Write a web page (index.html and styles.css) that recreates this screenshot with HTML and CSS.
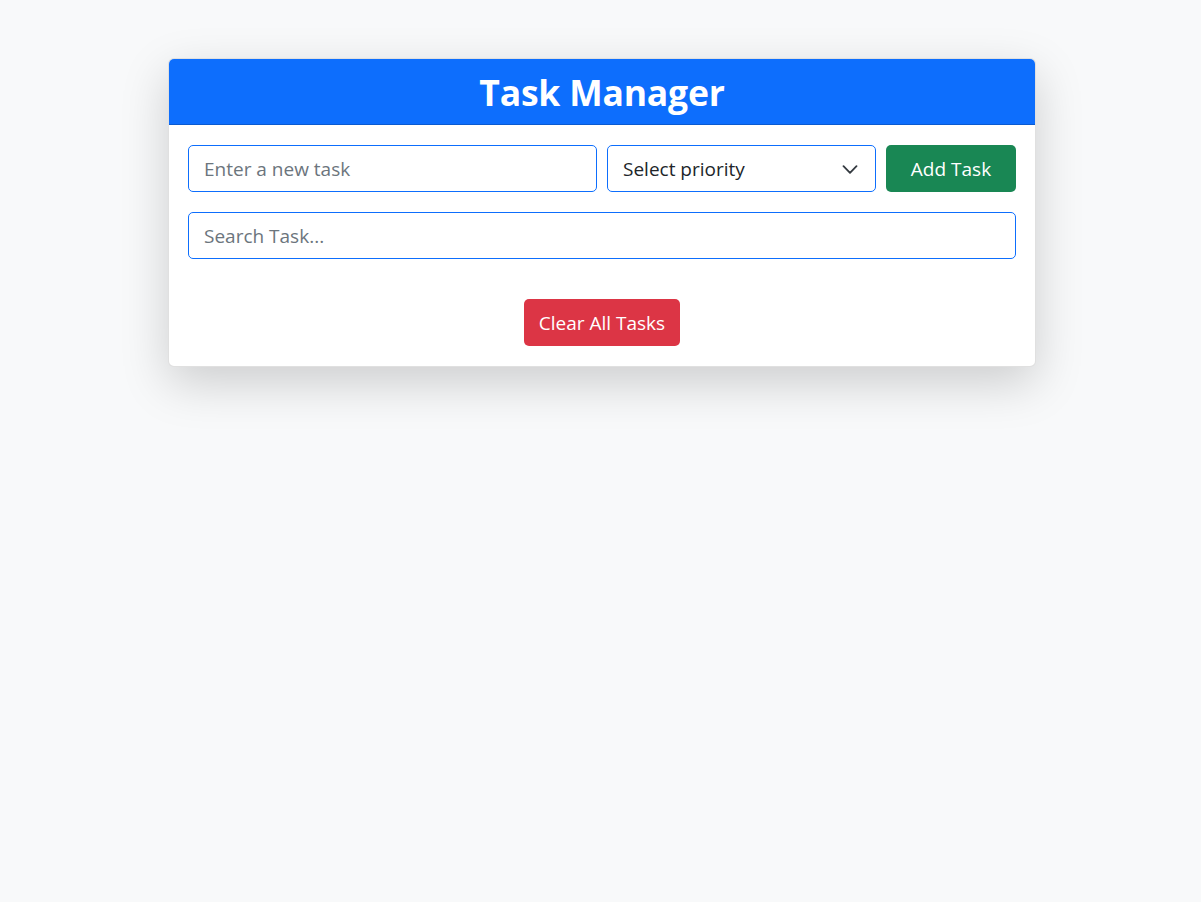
FILE: index.html
```html
<!DOCTYPE html>
<html lang="en">
<head>
<meta charset="utf-8">
<title>Task Manager</title>
<link rel="stylesheet" href="styles.css">
</head>
<body>
<main class="page">
  <section class="card">
    <header class="card-header">
      <h1 class="title">Task Manager</h1>
    </header>
    <div class="card-body">
      <div class="add-row">
        <input class="field field-task" type="text" placeholder="Enter a new task">
        <div class="select-wrap">
          <select class="field field-select">
            <option>Select priority</option>
            <option>High</option>
            <option>Medium</option>
            <option>Low</option>
          </select>
          <svg class="chevron" viewBox="0 0 16 9" width="16" height="9" aria-hidden="true"><path fill="none" stroke="#343a40" stroke-linecap="round" stroke-linejoin="round" stroke-width="1.8" d="M1.5 1.2 8 7.8 14.5 1.2"/></svg>
        </div>
        <button class="btn btn-add" type="button">Add Task</button>
      </div>
      <input class="field field-search" type="text" placeholder="Search Task...">
      <ul class="task-list"></ul>
      <div class="actions">
        <button class="btn btn-clear" type="button">Clear All Tasks</button>
      </div>
    </div>
  </section>
</main>
</body>
</html>
```
FILE: styles.css
```css
* { box-sizing: border-box; }
html, body { margin: 0; padding: 0; }
body {
  background: #f8f9fa;
  font-family: "Open Sans", "Noto Sans", sans-serif;
  color: #212529;
  min-height: 100vh;
}
.page {
  display: flex;
  justify-content: center;
  padding-top: 58px;
  padding-left: 3px;
}
.card {
  width: 868px;
  background: #fff;
  border: 1px solid rgba(0,0,0,.12);
  border-radius: 6px;
  box-shadow: 0 16px 48px rgba(0,0,0,.175);
  overflow: hidden;
}
.card-header {
  background: #0d6efd;
  border-bottom: 1px solid rgba(0,0,0,.175);
  padding: 9px 16px 7px;
  text-align: center;
}
.title {
  margin: 0;
  color: #fff;
  font-size: 35.5px;
  font-weight: 700;
  line-height: 49px;
  letter-spacing: -0.2px;
}
.card-body {
  padding: 20px 19px 20px;
  display: flex;
  flex-direction: column;
}
.add-row {
  display: flex;
  gap: 10px;
}
.field {
  height: 47px;
  font-family: inherit;
  font-size: 19px;
  color: #212529;
  background: #fff;
  border: 1px solid #0d6efd;
  border-radius: 5px;
  padding: 0 15px;
  outline: none;
}
.field::placeholder { color: #6c757d; opacity: 1; }
.field-task { width: 409px; }
.select-wrap {
  position: relative;
  width: 269px;
}
.field-select {
  width: 100%;
  appearance: none;
  -webkit-appearance: none;
  padding-right: 48px;
}
.chevron {
  position: absolute;
  right: 18px;
  top: 20px;
  pointer-events: none;
}
.btn {
  height: 47px;
  border: 0;
  border-radius: 5px;
  color: #fff;
  font-family: inherit;
  font-size: 19px;
  padding: 0 16px;
}
.btn-add {
  width: 130px;
  background: #198754;
}
.field-search {
  margin-top: 20px;
  width: 100%;
}
.task-list {
  list-style: none;
  margin: 0;
  padding: 0;
  min-height: 40px;
}
.actions {
  display: flex;
  justify-content: center;
}
.btn-clear {
  background: #dc3545;
  width: 156px;
  padding: 0 8px;
}
```
